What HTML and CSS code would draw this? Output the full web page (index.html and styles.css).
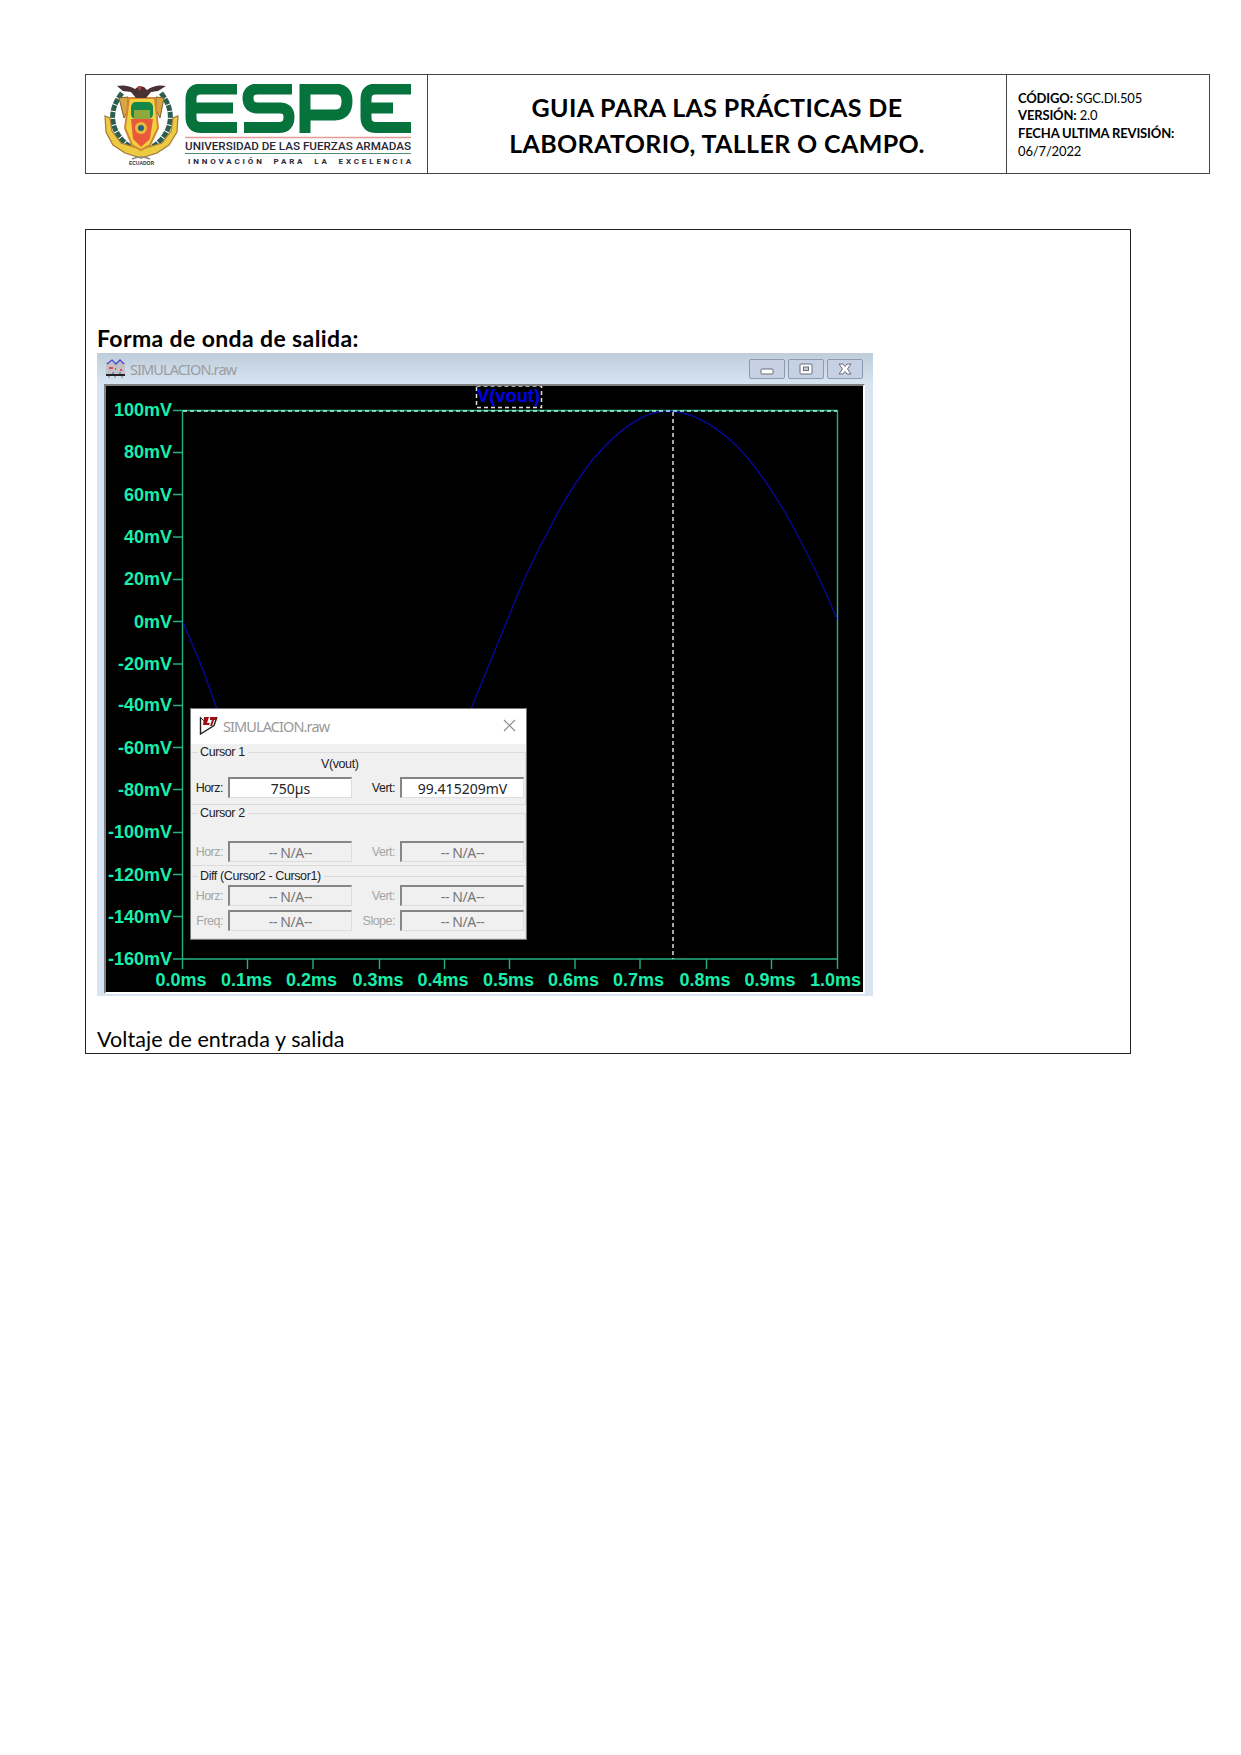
FILE: index.html
```html
<!DOCTYPE html>
<html lang="es">
<head>
<meta charset="utf-8">
<title>Guia para las prácticas de laboratorio</title>
<link rel="stylesheet" href="styles.css">
</head>
<body>
<header class="doc-header">
  <div class="logo-cell">
    <svg class="logo" viewBox="104 84 308 81" width="308" height="81">
      <g class="emblem">
        <path d="M122 93Q107 112 116 131Q123 145 138 150" fill="none" stroke="#2c5f4f" stroke-width="5" stroke-dasharray="6 1"/>
        <path d="M161 93Q176 112 167 131Q160 145 145 150" fill="none" stroke="#2c5f4f" stroke-width="5" stroke-dasharray="6 1"/>
        <path d="M105 116L110 118L112 131L121 143L141 149L162 143L171 131L173 118L178 116L177 132L169 145L157 153L141 158L125 153L113 145L106 132Z" fill="#eccb43" stroke="#a37838" stroke-width="1.2"/>
        <path d="M119 98L128 97V110L124 118ZM164 98L156 97V110L160 118Z" fill="#d8a444" stroke="#80602e"/>
        <path d="M129 98H155L158 128L150 145L141 150L132 145L125 128Z" fill="#f2d13e" stroke="#d38835" stroke-width="2"/>
        <rect x="131" y="102" width="22" height="17" rx="5" fill="#16874b"/>
        <path d="M134 110H150V119H134Z" fill="#8fa83d"/>
        <path d="M131 119H153L150 139L141 147L133 139Z" fill="#e95a3d"/>
        <circle cx="141" cy="128" r="6" fill="#e4bc38"/><circle cx="141" cy="128" r="3" fill="#27617b"/>
        <path d="M117 86Q127 84 135 89L139 86L144 87L147 90Q155 84 166 86L158 91L151 92L146 98H136L131 92L123 91Z" fill="#493033"/>
        <path d="M137 87L142 86L140 91Z" fill="#bd443d"/>
        <path d="M132 159Q141 155 150 159" fill="none" stroke="#888" stroke-width="1.5"/>
        <text x="129" y="164.500" textLength="25" lengthAdjust="spacingAndGlyphs" class="emblem-name">ECUADOR</text>
      </g>
      <g class="wordmark" fill="none" stroke="#06733d" stroke-width="11">
        <path d="M237 89H201Q191 89 191 99V117Q191 127.500 201 127.500H237M191 108H233"/>
        <path d="M292 89H258Q248 89 248 98Q248 108 258 108H280Q289 108 289 117Q289 127.500 279 127.500H244"/>
        <path d="M305 133V89H335Q347 89 347 101Q347 115 335 115H305"/>
        <path d="M411 89H376Q366 89 366 99V117Q366 127.500 376 127.500H411M366 108H393"/>
      </g>
      <path d="M185 137.500H411" stroke="#e49b96" stroke-width="1.500"/>
      <text x="185" y="150" textLength="226" lengthAdjust="spacingAndGlyphs" class="uni">UNIVERSIDAD DE LAS FUERZAS ARMADAS</text>
      <path d="M185 153.500H411" stroke="#4f8d70" stroke-width="1"/>
      <text x="188" y="164" textLength="223" class="motto">INNOVACIÓN PARA LA EXCELENCIA</text>
    </svg>
  </div>
  <h1 class="doc-title">GUIA PARA LAS PRÁCTICAS DE<br>LABORATORIO, TALLER O CAMPO.</h1>
  <div class="doc-meta">
    <p><b>CÓDIGO:</b> SGC.DI.505</p>
    <p><b>VERSIÓN:</b> 2.0</p>
    <p><b class="rev">FECHA ULTIMA REVISIÓN:</b></p>
    <p>06/7/2022</p>
  </div>
</header>
<main class="sheet">
  <h2 class="section-title">Forma de onda de salida:</h2>
  <section class="sim-window">
    <div class="sim-bar">
      <svg class="sim-icon" width="19" height="19" viewBox="0 0 19 19"><path fill="#c1c1c6" d="M0 3H19V16H0Z"/><path d="M1 5L6 1L10 5L14 1L18 5" fill="none" stroke="#4646d2" stroke-width="1.300"/><path d="M3 9H7M9 10H10M14 11H16" stroke="#e44" stroke-width="2"/><path d="M6 14H8M13 14H15" stroke="#55b"/><path d="M0 16H19" stroke="#222" stroke-width="2"/><path d="M2 18H4M8 18H10M15 18H17" stroke="#777"/></svg>
      <span class="sim-name">SIMULACION.raw</span>
      <div class="sim-controls">
        <span class="ctl"><svg width="20" height="16"><rect x="4" y="8" width="12" height="5" rx="1" fill="#fff" stroke="#696d78"/></svg></span>
        <span class="ctl"><svg width="20" height="16"><rect x="4" y="3" width="12" height="10" rx="1" fill="#fff" stroke="#696d78"/><rect x="7.500" y="6" width="5" height="3.500" fill="#c4cbd7" stroke="#696d78"/></svg></span>
        <span class="ctl"><svg width="20" height="16"><path d="M4 3H8L10 5.500L12 3H16L12.500 8L16 13H12L10 10.500L8 13H4L7.500 8Z" fill="#fff" stroke="#696d78"/></svg></span>
      </div>
    </div>
    <div class="plot">
      <svg class="chart" viewBox="106 386 757 606" width="757" height="606">
        <g class="axis">
          <path d="M173 410.500H837.500M173 959H837.500M182.500 410V969M837.500 410V969"/>
          <path d="M173 452.500H182M173 494.500H182M173 537H182M173 579.500H182M173 621.500H182M173 664H182M173 705.500H182M173 747.500H182M173 789.500H182M173 832.500H182M173 874.500H182M173 916.500H182"/>
          <path d="M247.500 959V969M313 959V969M379.500 959V969M444.500 959V969M509.500 959V969M575 959V969M640 959V969M706.500 959V969M771.500 959V969"/>
        </g>
        <g class="tick ylab">
          <text x="172" y="416">100mV</text><text x="172" y="458">80mV</text><text x="172" y="500.500">60mV</text><text x="172" y="543">40mV</text><text x="172" y="585">20mV</text><text x="172" y="627.500">0mV</text><text x="172" y="669.500">-20mV</text><text x="172" y="711">-40mV</text><text x="172" y="753.500">-60mV</text><text x="172" y="796">-80mV</text><text x="172" y="838">-100mV</text><text x="172" y="880.500">-120mV</text><text x="172" y="923">-140mV</text><text x="172" y="965">-160mV</text>
        </g>
        <g class="tick xlab">
          <text x="181" y="986">0.0ms</text><text x="246.500" y="986">0.1ms</text><text x="311.500" y="986">0.2ms</text><text x="378" y="986">0.3ms</text><text x="443" y="986">0.4ms</text><text x="508.500" y="986">0.5ms</text><text x="573.500" y="986">0.6ms</text><text x="638.500" y="986">0.7ms</text><text x="705" y="986">0.8ms</text><text x="770" y="986">0.9ms</text><text x="835.500" y="986">1.0ms</text>
        </g>
        <path class="trace" d="M183 622L203 670L217 709M471 709L509 616Q528 567 550 528Q568 491 594 458Q635 411 667 411Q700 411 737 446Q762 472 790 521Q818 572 837 619"/>
        <path class="cursor" d="M183 411H837"/><path class="cursor white" d="M673 412V959"/>
        <rect class="cursor white" x="476.500" y="386" width="65" height="21.500"/>
        <text class="signal" x="477" y="402" textLength="63" lengthAdjust="spacingAndGlyphs">V(vout)</text>
      </svg>
      <div class="dialog">
        <div class="dialog-bar">
          <svg width="19" height="19" viewBox="0 0 19 19"><path d="M1.500 1V18L15 9.500L18 1" fill="none" stroke="#222" stroke-width="1.400"/><path d="M1 1L8 8" stroke="#333"/><path d="M5 1H10L8 7H11L10 9H4ZM11 1H18L17 4H15L13 10H11L13 4H11Z" fill="#9b1015"/></svg>
          <span class="dialog-name">SIMULACION.raw</span>
          <svg class="close" width="13" height="13"><path d="M1 1L12 12M12 1L1 12" stroke="#8c8c8c" stroke-width="1.200"/></svg>
        </div>
        <fieldset class="group g1"><legend>Cursor 1</legend>
          <div class="signal-name">V(vout)</div>
          <div class="row"><label>Horz:</label><span class="field on">750µs</span><label>Vert:</label><span class="field on">99.415209mV</span></div>
        </fieldset>
        <fieldset class="group g2"><legend>Cursor 2</legend>
          <div class="row off"><label>Horz:</label><span class="field">-- N/A--</span><label>Vert:</label><span class="field">-- N/A--</span></div>
        </fieldset>
        <fieldset class="group g3"><legend>Diff (Cursor2 - Cursor1)</legend>
          <div class="row off"><label>Horz:</label><span class="field">-- N/A--</span><label>Vert:</label><span class="field">-- N/A--</span></div>
          <div class="row off"><label>Freq:</label><span class="field">-- N/A--</span><label>Slope:</label><span class="field">-- N/A--</span></div>
        </fieldset>
      </div>
    </div>
  </section>
  <p class="caption">Voltaje de entrada y salida</p>
</main>
</body>
</html>
```
FILE: styles.css
```css
* { box-sizing: border-box; }
body { margin: 0; padding: 74px 0 0 85px; background: #fff; color: #000; font-family: Lato, sans-serif; }
h1, h2, p { margin: 0; }
svg { display: block; flex: none; }
.doc-header { display: grid; grid-template-columns: 341px 580px 1fr; width: 1125px; height: 100px; border: 1.5px solid #444; }
.logo-cell { padding: 9px 0 0 18px; }
.emblem-name { font: bold 5px "Liberation Sans", sans-serif; fill: #333; }
.uni { font: 500 10.5px Roboto, sans-serif; fill: #292735; }
.motto { font: bold 8px Roboto, sans-serif; fill: #292735; word-spacing: 4px; }
.doc-title { border: solid #444; border-width: 0 1px; text-align: center; font-size: 25px; line-height: 36px; font-weight: 700; padding-top: 14px; white-space: nowrap; letter-spacing: .36px; }
.doc-meta { padding: 14.5px 0 0 11px; font-size: 13px; line-height: 17.7px; white-space: nowrap; letter-spacing: -.15px; }
.sheet { width: 1046px; height: 825px; margin-top: 55px; border: 1.5px solid #222; padding: 93px 0 0 11px; }
.section-title { font-size: 23px; line-height: 30px; height: 30px; letter-spacing: .38px; white-space: nowrap; }
.sim-window { width: 776px; height: 643px; background: #d7e4f1; padding: 0 8px 0 7px; }
.sim-bar { display: flex; align-items: center; height: 31px; margin: 0 -8px 0 -7px; padding: 0 10px 0 9px; background: linear-gradient(#bfccda, #d7e4f1); }
.sim-name { margin-left: 5px; font: 14.5px/20px "Noto Sans", sans-serif; color: #9a9da1; letter-spacing: -.9px; }
.sim-controls { display: flex; gap: 3px; margin-left: auto; }
.ctl { display: flex; align-items: center; justify-content: center; width: 36px; height: 20px; border: 1px solid #8c9ab1; border-radius: 2px; background: #c6d2e3; }
.plot { position: relative; height: 610px; background: #000; border: 2px solid #808080; border-right-color: #fff; border-bottom-color: #fff; }
.axis { fill: none; stroke: #24b184; stroke-width: 1.4; }
.tick { font: bold 18px "Liberation Sans", sans-serif; fill: #17efaa; }
.ylab { text-anchor: end; }
.xlab { text-anchor: middle; }
.trace { fill: none; stroke: #0808a0; stroke-width: 1.3; }
.cursor { fill: none; stroke: #b1f5d7; stroke-width: 1.5; stroke-dasharray: 4 3; }
.white { stroke: #ddd; }
.signal { font: bold 18px "Liberation Sans", sans-serif; fill: #0000e8; }
.dialog { position: absolute; left: 84px; top: 322px; width: 337px; height: 232px; background: #f0f0f0; border: 1px solid #777; font: 12.5px/16px "Liberation Sans", sans-serif; color: #222; }
.dialog-bar { display: flex; align-items: center; height: 35px; padding: 0 10px 2px 8px; background: #fff; }
.dialog-name { margin-left: 5px; font: 14.5px/20px "Noto Sans", sans-serif; color: #999; letter-spacing: -.9px; }
.close { margin-left: auto; }
.group { margin: 0; padding: 0; border: 1px solid #dcdcdc; border-left: 0; min-width: 0; }
.group legend { margin-left: 7px; padding: 0 3px 0 2px; height: 16px; letter-spacing: -.4px; }
.g1 { height: 61px; }
.g2 { height: 61px; margin-top: 0; }
.g3 { height: 71px; margin-top: 2px; }
.signal-name { height: 16px; margin: -4px 0 5px 130px; letter-spacing: -.4px; }
.row { display: grid; grid-template-columns: 35px 124px 44px 124px; column-gap: 2px; width: 334px; height: 21px; margin-bottom: 4px; align-items: center; }
.row label { text-align: right; letter-spacing: -.5px; padding-right: 3px; }
.off { color: #a5a5a5; }
.g2 .row { margin-top: 20px; }
.g3 legend + .row { margin-top: 1px; }
.field { height: 21px; border: 2px solid #858585; border-right: 1px solid #ddd; border-bottom: 1px solid #ddd; text-align: center; color: #777; font: 14px/19px "Noto Sans", sans-serif; letter-spacing: -.4px; }
.on { background: #fff; color: #222; letter-spacing: 0; }
.caption { font-size: 21.5px; line-height: 30px; margin-top: 28px; letter-spacing: .08px; }
```
